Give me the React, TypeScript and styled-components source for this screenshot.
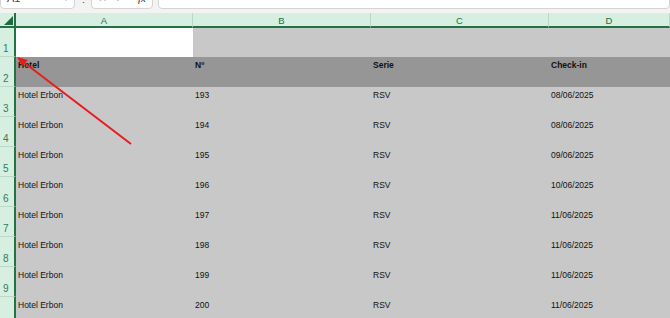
import React from 'react';
import styled, { createGlobalStyle } from 'styled-components';

const GlobalStyle = createGlobalStyle`
  html, body {
    margin: 0;
    padding: 0;
    background: #f3f3f3;
  }
  body {
    width: 670px;
    height: 318px;
    overflow: hidden;
    font-family: 'Liberation Sans', Arial, sans-serif;
  }
`;

const Window = styled.div`
  position: relative;
  width: 670px;
  height: 318px;
  overflow: hidden;
  background: #f3f3f3;
  display: flex;
  flex-direction: column;
`;

const FormulaBar = styled.div`
  display: flex;
  align-items: flex-end;
  height: 9px;
  overflow: hidden;
  flex: 0 0 9px;
`;

const BarBox = styled.div<{ $w?: number }>`
  flex: ${(p) => (p.$w ? `0 0 ${p.$w}px` : '1')};
  height: 22px;
  box-sizing: border-box;
  background: #fff;
  border: 1px solid #d4d4d4;
  border-radius: 4px;
  display: flex;
  align-items: flex-end;
  padding: 0 6px 4px;
  color: #444;
  font-size: 11px;
  line-height: 11px;
`;

const NameText = styled.span`
  flex: 1;
`;

const Caret = styled.span`
  font-size: 8px;
  color: #777;
`;

const Dots = styled.span`
  flex: 0 0 16px;
  text-align: center;
  color: #555;
  font-size: 11px;
  line-height: 11px;
  padding-bottom: 4px;
`;

const IconSlot = styled.span`
  color: #bbb;
  margin-right: 8px;
  font-size: 11px;
`;

const Fx = styled.span`
  font-family: 'Liberation Serif', serif;
  font-style: italic;
  color: #333;
  margin-left: 6px;
`;

const Gap = styled.div<{ $size: number }>`
  flex: 0 0 ${(p) => p.$size}px;
`;

const Sheet = styled.div`
  display: grid;
  grid-template-columns: 16px 177px 178px 178px 1fr;
  grid-template-rows: 15px 29px repeat(9, 30px);
  background: #c8c8c8;
  flex: 1;
`;

const Corner = styled.div`
  background: #d6efe1;
  border-right: 2px solid #217346;
  border-bottom: 2px solid #217346;
  box-sizing: border-box;
  display: flex;
  align-items: flex-end;
  justify-content: flex-end;
  padding: 0 1px 1px 0;
`;

const CornerMark = styled.div`
  width: 9px;
  height: 9px;
  background: #1e6b41;
  clip-path: polygon(100% 0, 100% 100%, 0 100%);
`;

const ColHead = styled.div`
  background: #d6efe1;
  border-bottom: 2px solid #217346;
  border-right: 1px solid #b7d9c5;
  box-sizing: border-box;
  display: flex;
  align-items: center;
  justify-content: center;
  padding-top: 1px;
  font-size: 9.5px;
  color: #1f6e43;
`;

const RowHead = styled.div`
  background: #d6efe1;
  border-right: 2px solid #217346;
  border-bottom: 1px solid #b9dac7;
  box-sizing: border-box;
  display: flex;
  align-items: flex-end;
  padding: 0 0 2px 3px;
  font-size: 10px;
  color: #2f7d55;
`;

const Cell = styled.div<{ $tone: 'white' | 'head' | 'body' }>`
  background: ${(p) => (p.$tone === 'white' ? '#ffffff' : p.$tone === 'head' ? '#969696' : '#c8c8c8')};
  padding: 2px 3px 0 2px;
  font-size: 8.5px;
  line-height: 12px;
  font-weight: ${(p) => (p.$tone === 'head' ? 700 : 400)};
  color: #111;
  white-space: nowrap;
  overflow: hidden;
`;

const Arrow = styled.svg`
  position: absolute;
  left: 0;
  top: 0;
  pointer-events: none;
`;

const columns = ['A', 'B', 'C', 'D'];
const header = ['Hotel', 'Nº', 'Serie', 'Check-in'];
const rows = [
  ['193', '08/06/2025'],
  ['194', '08/06/2025'],
  ['195', '09/06/2025'],
  ['196', '10/06/2025'],
  ['197', '11/06/2025'],
  ['198', '11/06/2025'],
  ['199', '11/06/2025'],
  ['200', '11/06/2025'],
];

export default function App() {
  return (
    <Window>
      <GlobalStyle />
      <FormulaBar>
        <BarBox $w={75}>
          <NameText>A1</NameText>
          <Caret>▾</Caret>
        </BarBox>
        <Dots>⋮</Dots>
        <BarBox $w={60}>
          <IconSlot>✕</IconSlot>
          <IconSlot>✓</IconSlot>
          <Fx>fx</Fx>
        </BarBox>
        <Gap $size={5} />
        <BarBox />
      </FormulaBar>
      <Gap $size={4} />
      <Sheet>
        <Corner>
          <CornerMark />
        </Corner>
        {columns.map((c) => (
          <ColHead key={c}>{c}</ColHead>
        ))}

        <RowHead>1</RowHead>
        <Cell $tone="white" />
        <Cell $tone="body" />
        <Cell $tone="body" />
        <Cell $tone="body" />

        <RowHead>2</RowHead>
        {header.map((h) => (
          <Cell key={h} $tone="head">
            {h}
          </Cell>
        ))}

        {rows.map((r, i) => (
          <React.Fragment key={r[0]}>
            <RowHead>{i + 3 <= 9 ? i + 3 : ''}</RowHead>
            <Cell $tone="body">Hotel Erbon</Cell>
            <Cell $tone="body">{r[0]}</Cell>
            <Cell $tone="body">RSV</Cell>
            <Cell $tone="body">{r[1]}</Cell>
          </React.Fragment>
        ))}
      </Sheet>
      <Arrow width="670" height="318" viewBox="0 0 670 318">
        <line x1="131" y1="144" x2="22" y2="61" stroke="#e81c1c" strokeWidth="2" />
        <polygon points="17,57 28,60 22,66" fill="#e81c1c" />
      </Arrow>
    </Window>
  );
}
